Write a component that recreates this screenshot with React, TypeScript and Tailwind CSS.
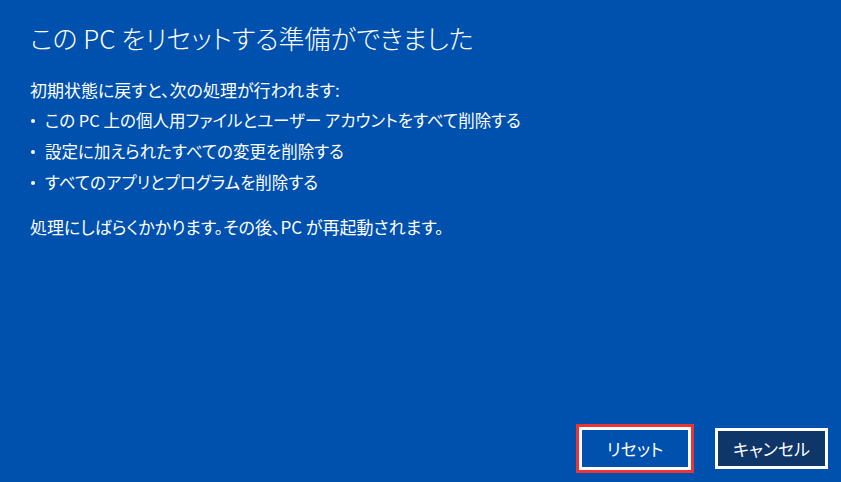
export default function App() {
  const items = [
    "この PC 上の個人用ファイルとユーザー アカウントをすべて削除する",
    "設定に加えられたすべての変更を削除する",
    "すべてのアプリとプログラムを削除する",
  ]

  return (
    <div
      className="flex h-[482px] w-[841px] flex-col bg-[#0050ae] text-white [font-feature-settings:'palt']"
      style={{ fontFamily: '"Noto Sans CJK JP", "Noto Sans", sans-serif' }}
    >
      <div className="flex-1 pl-[30px] pt-[20px]">
        <h1 className="text-[26px] font-light leading-[36px]">
          この PC をリセットする準備ができました
        </h1>
        <p className="mt-[18px] text-[17px] leading-[31px]">
          初期状態に戻すと、次の処理が行われます:
        </p>
        <ul className="text-[16.5px] leading-[31px]">
          {items.map((item) => (
            <li key={item} className="flex items-center">
              <span className="mr-[10px] ml-[1px] size-[4px] rounded-full bg-white" />
              <span>{item}</span>
            </li>
          ))}
        </ul>
        <p className="mt-[13px] text-[17px] leading-[31px]">
          処理にしばらくかかります。その後、PC が再起動されます。
        </p>
      </div>

      <div className="flex items-center justify-end gap-[21px] pr-[13px] pb-[9px]">
        <div className="border-[3px] border-[#ee3333] p-0">
          <button className="flex h-[43px] w-[112px] items-center justify-center border-[3px] border-white bg-[#0050ae] text-[17px]">
            リセット
          </button>
        </div>
        <button className="flex h-[41px] w-[113px] items-center justify-center border-[3px] border-white bg-[#0f3668] text-[17px]">
          キャンセル
        </button>
      </div>
    </div>
  )
}
